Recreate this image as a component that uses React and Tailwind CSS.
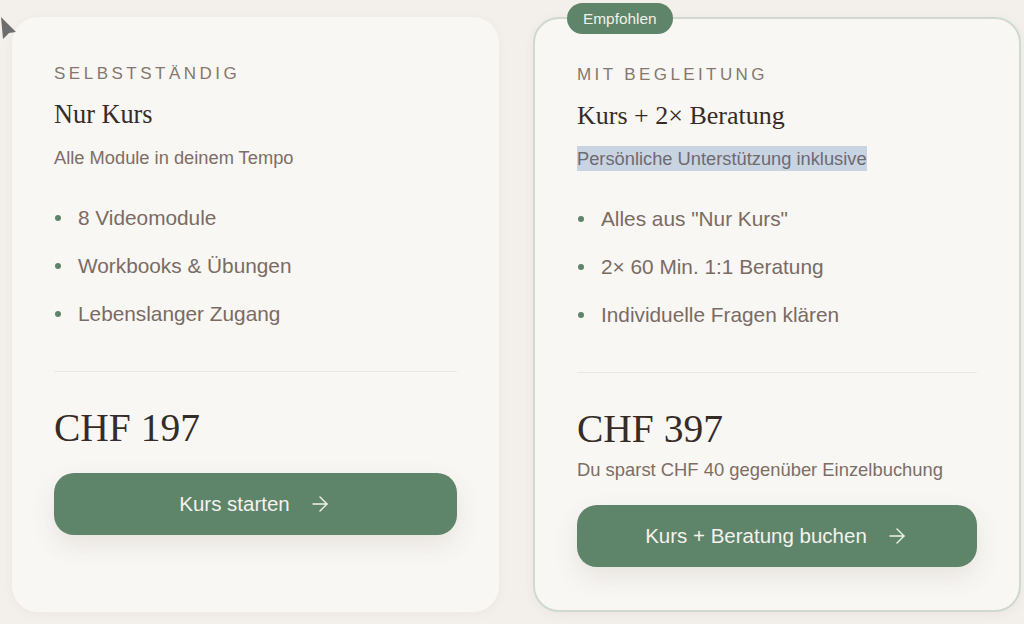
import React from 'react';
import { ArrowRight } from 'lucide-react';

const sans = { fontFamily: '"Liberation Sans", Arial, sans-serif' };
const serif = { fontFamily: '"Liberation Serif", "Times New Roman", serif' };

const Bullet = ({ children }) => (
  <li className="flex items-center h-[28px] text-[20.8px] text-[#7a6b63]">
    <span className="w-[6px] h-[6px] rounded-full bg-[#5e8469] ml-[1px] mr-[17px] shrink-0" />
    {children}
  </li>
);

const CtaButton = ({ label }) => (
  <button className="w-full h-[62px] rounded-[20px] bg-[#5e8469] text-[#f5f2ed] text-[20.5px] flex items-center justify-center gap-[18px] shadow-[0_10px_26px_rgba(70,55,40,0.10)]">
    <span>{label}</span>
    <ArrowRight size={24} strokeWidth={1.4} />
  </button>
);

export default function App() {
  return (
    <div
      className="relative w-full h-[624px] overflow-hidden bg-[#f3efeb] flex gap-[34px] pl-[12px] pt-[17px] pb-[12px]"
      style={sans}
    >
      {/* mouse cursor in corner */}
      <svg className="absolute left-0 top-[15px]" width="20" height="26" viewBox="0 0 20 26">
        <path d="M1 2 L16 17 L9 18 L3 24 Z" fill="#6d6d6d" />
      </svg>

      {/* Plan 1 */}
      <div className="w-[487px] h-[595px] rounded-[26px] bg-[#f9f7f4] shadow-[0_2px_12px_rgba(80,60,40,0.04)] px-[42px] pt-[47px] flex flex-col">
        <div className="text-[17px] leading-[20px] tracking-[3.5px] text-[#85776e]">SELBSTSTÄNDIG</div>
        <h3 className="mt-[15px] text-[26.3px] leading-[32px] text-[#362c27]" style={serif}>
          Nur Kurs
        </h3>
        <p className="mt-[14px] text-[18.3px] leading-[25px] text-[#7d6e66]">Alle Module in deinem Tempo</p>
        <ul className="mt-[34px] flex flex-col gap-[20px]">
          <Bullet>8 Videomodule</Bullet>
          <Bullet>Workbooks &amp; Übungen</Bullet>
          <Bullet>Lebenslanger Zugang</Bullet>
        </ul>
        <div className="mt-[43px] h-px bg-[#ece7e1]" />
        <div className="mt-[32px] text-[39.5px] leading-[48px] text-[#362c27]" style={serif}>
          CHF 197
        </div>
        <div className="mt-[21px]">
          <CtaButton label="Kurs starten" />
        </div>
      </div>

      {/* Plan 2 */}
      <div className="relative w-[488px] h-[595px] rounded-[26px] bg-[#f9f7f4] border-2 border-[#cfd9d0] shadow-[0_2px_12px_rgba(80,60,40,0.05)] px-[42px] pt-[46px] flex flex-col">
        <div className="absolute -top-[16px] left-[32px] h-[31px] px-[16px] rounded-full bg-[#5e8469] text-[#f3f0ea] text-[15.4px] flex items-center">
          Empfohlen
        </div>
        <div className="text-[17px] leading-[20px] tracking-[3.4px] text-[#85776e]">MIT BEGLEITUNG</div>
        <h3 className="mt-[15px] text-[26px] leading-[32px] text-[#362c27]" style={serif}>
          Kurs + 2× Beratung
        </h3>
        <p className="mt-[14px] h-[25px] text-[18.3px] leading-[25px] text-[#7d6e66]">
          <span className="inline-block bg-[#c8d4e2] text-[#6f6a70] leading-[25px]">Persönliche Unterstützung inklusive</span>
        </p>
        <ul className="mt-[34px] flex flex-col gap-[20px]">
          <Bullet>Alles aus "Nur Kurs"</Bullet>
          <Bullet>2× 60 Min. 1:1 Beratung</Bullet>
          <Bullet>Individuelle Fragen klären</Bullet>
        </ul>
        <div className="mt-[43px] h-px bg-[#ece7e1]" />
        <div className="mt-[32px] text-[39.5px] leading-[48px] text-[#362c27]" style={serif}>
          CHF 397
        </div>
        <p className="mt-[4px] text-[18.4px] leading-[26px] text-[#7d6e66]">Du sparst CHF 40 gegenüber Einzelbuchung</p>
        <div className="mt-[22px]">
          <CtaButton label="Kurs + Beratung buchen" />
        </div>
      </div>
    </div>
  );
}
